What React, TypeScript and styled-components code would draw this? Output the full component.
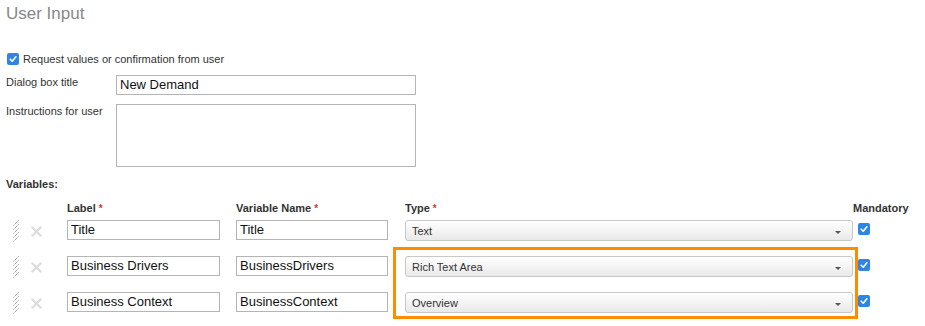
import React from 'react';
import styled, { createGlobalStyle } from 'styled-components';

const GlobalStyle = createGlobalStyle`
  html, body {
    margin: 0;
    padding: 0;
    background: #fff;
  }
  body {
    font-family: 'Liberation Sans', Arial, sans-serif;
    color: #333;
  }
`;

const Page = styled.div`
  width: 925px;
  height: 326px;
  box-sizing: border-box;
  padding: 4px 6px 0 6px;
  overflow: hidden;
`;

const Title = styled.h2`
  margin: 0;
  font-size: 17px;
  line-height: 20px;
  font-weight: normal;
  color: #888;
`;

const CheckRow = styled.label`
  display: flex;
  align-items: center;
  gap: 4px;
  margin-top: 27px;
  height: 16px;
  font-size: 11px;
  color: #333;
  padding-left: 1px;
`;

const FormRow = styled.div<{ $top: number }>`
  display: flex;
  align-items: flex-start;
  margin-top: ${p => p.$top}px;
`;

const FieldLabel = styled.div`
  width: 110px;
  font-size: 11px;
  line-height: 13px;
  padding-top: 1px;
  color: #333;
`;

const TextInput = styled.div<{ $w: number }>`
  box-sizing: border-box;
  width: ${p => p.$w}px;
  height: 20px;
  border: 1px solid #b5b5b5;
  background: #fff;
  padding: 0 3px;
  font-size: 13px;
  line-height: 18px;
  color: #111;
  white-space: nowrap;
  overflow: hidden;
`;

const TextArea = styled.div`
  box-sizing: border-box;
  width: 300px;
  height: 63px;
  border: 1px solid #b5b5b5;
  background: #fff;
`;

const SectionHead = styled.div`
  margin-top: 11px;
  font-size: 11px;
  font-weight: bold;
  line-height: 13px;
  color: #333;
`;

const Table = styled.div`
  position: relative;
  margin-top: 11px;
`;

const Grid = styled.div`
  display: grid;
  grid-template-columns: 22px 39px 169px 169px 448px 60px;
  grid-auto-rows: 36px;
  grid-template-rows: 18px;
  align-items: start;
`;

const HeadCell = styled.div`
  font-size: 11px;
  font-weight: bold;
  line-height: 13px;
  color: #333;
  white-space: nowrap;
`;

const Req = styled.span`
  color: #e03030;
  margin-left: 3px;
  font-size: 10px;
`;

const HandleCell = styled.div`
  padding-left: 6px;
`;

const RemoveCell = styled.div`
  padding-top: 3px;
  padding-left: 3px;
`;

const Select = styled.div`
  box-sizing: border-box;
  width: 448px;
  height: 21px;
  border: 1px solid #c8c8c8;
  border-radius: 3px;
  background: linear-gradient(#ffffff, #e9e9e9);
  display: flex;
  align-items: center;
  justify-content: space-between;
  padding: 0 11px 0 6px;
  font-size: 11px;
  color: #333;
`;

const Caret = styled.span`
  width: 0;
  height: 0;
  border-left: 3.5px solid transparent;
  border-right: 3.5px solid transparent;
  border-top: 3.5px solid #555;
  margin-top: 3px;
`;

const CheckCell = styled.div`
  padding-left: 5px;
`;

const Box = styled.span`
  display: inline-flex;
  align-items: center;
  justify-content: center;
  width: 12px;
  height: 12px;
  border-radius: 2px;
  background: #2d86e5;
  flex: none;
`;

const Highlight = styled.div`
  position: absolute;
  left: 387px;
  top: 45px;
  width: 465px;
  height: 72px;
  box-sizing: border-box;
  border: 3px solid #ff8c00;
  pointer-events: none;
`;

const Check = () => (
  <Box>
    <svg width="10" height="10" viewBox="0 0 10 10">
      <path d="M2.2 5.2 L4.2 7.2 L7.9 2.8" fill="none" stroke="#fff" strokeWidth="1.6" strokeLinecap="round" strokeLinejoin="round" />
    </svg>
  </Box>
);

const DragHandle = () => (
  <svg width="8" height="24" viewBox="0 0 8 24">
    {[0, 4, 8, 12, 16].map(y => (
      <line key={y} x1="6.5" y1={y + 0.5} x2="1.5" y2={y + 5.5} stroke="#777" strokeWidth="1" strokeDasharray="1 1" />
    ))}
  </svg>
);

const RemoveIcon = () => (
  <svg width="11" height="11" viewBox="0 0 11 11">
    <path d="M1.5 1.5 L9.5 9.5 M9.5 1.5 L1.5 9.5" stroke="#dcdcdc" strokeWidth="2.4" strokeLinecap="round" />
  </svg>
);

const variables = [
  { label: 'Title', name: 'Title', type: 'Text' },
  { label: 'Business Drivers', name: 'BusinessDrivers', type: 'Rich Text Area' },
  { label: 'Business Context', name: 'BusinessContext', type: 'Overview' },
];

export default function App() {
  return (
    <Page>
      <GlobalStyle />
      <Title>User Input</Title>
      <CheckRow>
        <Check />
        Request values or confirmation from user
      </CheckRow>
      <FormRow $top={8}>
        <FieldLabel>Dialog box title</FieldLabel>
        <TextInput $w={300}>New Demand</TextInput>
      </FormRow>
      <FormRow $top={9}>
        <FieldLabel>Instructions for user</FieldLabel>
        <TextArea />
      </FormRow>
      <SectionHead>Variables:</SectionHead>
      <Table>
        <Grid>
          <div />
          <div />
          <HeadCell>Label<Req>*</Req></HeadCell>
          <HeadCell>Variable Name<Req>*</Req></HeadCell>
          <HeadCell>Type<Req>*</Req></HeadCell>
          <HeadCell>Mandatory</HeadCell>
          {variables.map(v => (
            <React.Fragment key={v.name}>
              <HandleCell><DragHandle /></HandleCell>
              <RemoveCell><RemoveIcon /></RemoveCell>
              <TextInput $w={153}>{v.label}</TextInput>
              <TextInput $w={152}>{v.name}</TextInput>
              <Select>
                <span>{v.type}</span>
                <Caret />
              </Select>
              <CheckCell><Check /></CheckCell>
            </React.Fragment>
          ))}
        </Grid>
        <Highlight />
      </Table>
    </Page>
  );
}
